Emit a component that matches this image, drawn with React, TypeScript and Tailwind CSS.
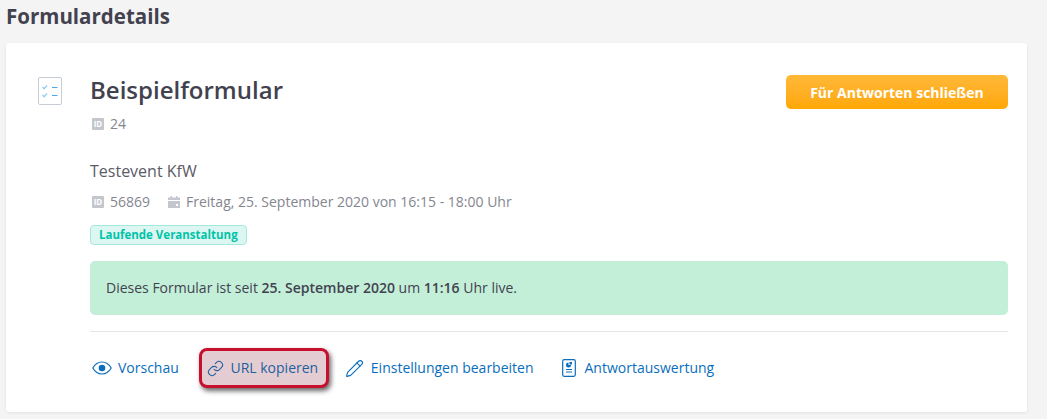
import React from 'react';
import { Link, Pencil } from 'lucide-react';

const IdIcon = () => (
  <span className="ml-[2px] flex h-3 w-3 shrink-0 items-center justify-center rounded-[1px] bg-[#c3c7cd] text-[8px] font-bold leading-none text-white">
    ID
  </span>
);

const CalendarIcon = () => (
  <svg viewBox="0 0 12 12" className="h-3 w-3 text-[#c3c7cd]" fill="currentColor">
    <rect x="2.5" y="0" width="1.5" height="2" />
    <rect x="8" y="0" width="1.5" height="2" />
    <path d="M0 1.5h12V4H0zM0 5h12v7H0z" />
    <rect x="8" y="8" width="2" height="2" fill="#fff" />
  </svg>
);

const ChecklistIcon = () => (
  <div className="h-[28px] w-[24px] rounded-[2px] border border-[#c5ccd6] bg-white">
    <svg viewBox="0 0 22 26" className="h-[26px] w-[22px]" fill="none">
      <path d="M3.5 9l1.700 1.700 2.800-3.400" stroke="#8fcdf5" strokeWidth="1.300" />
      <path d="M3.5 17l1.700 1.700 2.800-3.400" stroke="#8fcdf5" strokeWidth="1.300" />
      <path d="M13 9.5h5.500M13 17.500h5.500" stroke="#4aa8f0" strokeWidth="1.200" />
    </svg>
  </div>
);

const EyeIcon = () => (
  <svg viewBox="0 0 20 14" className="h-[14px] w-[20px]" fill="none" stroke="currentColor">
    <path d="M0.8 7C3 3.2 6.2 1 10 1s7 2.2 9.2 6c-2.2 3.8-5.4 6-9.2 6S3 10.800 0.800 7z" strokeWidth="1.2" />
    <circle cx="10" cy="7" r="3.300" fill="currentColor" stroke="none" />
  </svg>
);

const ReportIcon = () => (
  <svg viewBox="0 0 14 18" className="h-[18px] w-[14px]" fill="none" stroke="currentColor">
    <rect x="0.7" y="0.7" width="12.600" height="16.600" rx="1.500" strokeWidth="1.200" />
    <path d="M6.500 3.500a2.500 2.500 0 1 0 2.500 2.500H6.500z" fill="currentColor" stroke="none" />
    <path d="M7.500 3h2.500v2.500H7.500z" fill="currentColor" stroke="none" />
    <path d="M4 10.500h6M4 13h6" strokeWidth="1" />
  </svg>
);

export default function App() {
  return (
    <div className="h-[419px] overflow-hidden bg-[#f4f4f5] pl-[6px] pr-[20px] font-['Open_Sans',sans-serif]">
      <h1 className="h-[43px] pt-[1px] text-[20.500px] font-bold leading-[30px] text-[#42424f]">Formulardetails</h1>

      <div className="flex h-[369px] rounded-[3px] bg-white pl-[32px] pr-[19px] pt-[32px] shadow-[0_1px_3px_rgba(0,0,0,0.08)]">
        <div className="w-[52px] shrink-0 pt-[2px]">
          <ChecklistIcon />
        </div>

        <div className="min-w-0 flex-1">
          <div className="flex items-start justify-between">
            <div>
              <h2 className="text-[24px] font-semibold leading-[30px] text-[#42424f]">Beispielformular</h2>
              <div className="mt-[9px] flex items-center gap-[6px] text-[14px] leading-[20px] text-[#84868f]">
                <IdIcon />
                <span>24</span>
              </div>
            </div>
            <button className="h-[34px] w-[222px] rounded-[5px] bg-gradient-to-b from-[#ffb836] to-[#ffa700] text-[14px] font-bold text-white">
              Für Antworten schließen
            </button>
          </div>

          <p className="mt-[26px] text-[16px] leading-[22px] text-[#5a5c66]">Testevent KfW</p>

          <div className="mt-[10px] flex items-center text-[14px] leading-[20px] text-[#84868f]">
            <IdIcon />
            <span className="ml-[6px]">56869</span>
            <span className="ml-[18px]"><CalendarIcon /></span>
            <span className="ml-[6px]">Freitag, 25. September 2020 von 16:15 - 18:00 Uhr</span>
          </div>

          <span className="mt-[13px] inline-block h-[20px] rounded-[4px] border border-[#a3e9dd] bg-[#dcf6f2] px-[8px] text-[11.500px] font-bold leading-[18px] text-[#00c4a7]">
            Laufende Veranstaltung
          </span>

          <div className="mt-[16px] flex h-[54px] items-center rounded-[5px] bg-[#c3efd9] px-[16px] pb-[1px] text-[14px] text-[#42424f]">
            <p>
              Dieses Formular ist seit <b className="font-semibold">25. September 2020</b> um <b className="font-semibold">11:16</b> Uhr live.
            </p>
          </div>

          <div className="mt-[16px] flex items-center border-t border-[#e4e5e8] pt-[16px] text-[14px] leading-[40px] text-[#0a6ebd]">
            <a className="ml-[2px] flex items-center gap-[6px]">
              <EyeIcon />
              Vorschau
            </a>
            <a className="ml-[20px] flex h-[40px] w-[130px] items-center justify-center gap-[6px] rounded-[8px] border-[3px] border-[#c8102e] bg-[#e4cdd2] pr-[2px] text-[#1f5f9e] shadow-[2px_3px_5px_rgba(0,0,0,0.6)]">
              <Link className="h-[17px] w-[17px]" strokeWidth={1.5} />
              URL kopieren
            </a>
            <a className="ml-[16px] flex items-center gap-[7px]">
              <Pencil className="h-[19px] w-[19px]" strokeWidth={1.4} />
              Einstellungen bearbeiten
            </a>
            <a className="ml-[28px] flex items-center gap-[9px]">
              <ReportIcon />
              Antwortauswertung
            </a>
          </div>
        </div>
      </div>
    </div>
  );
}
